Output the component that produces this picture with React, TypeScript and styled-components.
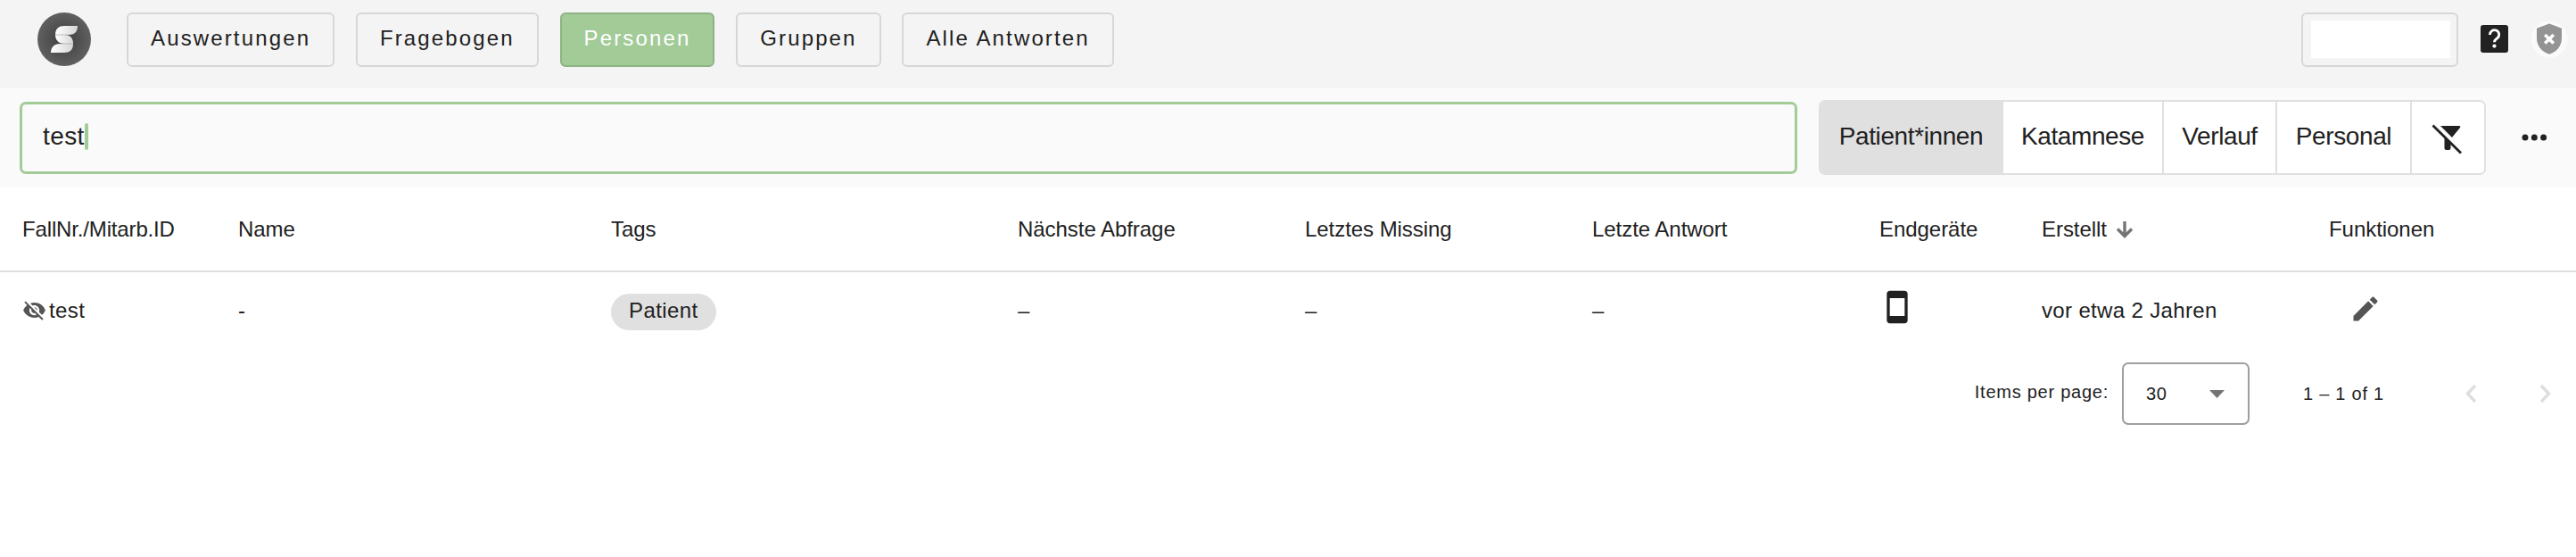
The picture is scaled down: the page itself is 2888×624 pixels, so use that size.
import React from "react";
import styled, { createGlobalStyle } from "styled-components";

interface NavItem {
  label: string;
  active?: boolean;
}

interface FilterItem {
  label: string;
  width: number;
  active?: boolean;
}

const GlobalStyle = createGlobalStyle`
  * {
    box-sizing: border-box;
  }

  body {
    margin: 0;
    background: #fff;
    color: #212121;
    font-family: "Liberation Sans", Arial, sans-serif;
  }
`;

const Page = styled.div`
  width: 2888px;
  height: 624px;
  overflow: hidden;
  background: #fff;
`;

const TopBar = styled.header`
  display: flex;
  align-items: flex-start;
  height: 99px;
  padding: 14px 15px 0 42px;
  background: #f4f4f4;
`;

const Logo = styled.svg`
  width: 60px;
  height: 60px;
  margin-right: 40px;
`;

const Nav = styled.nav`
  display: flex;
  gap: 23.8px;
  flex: 1;
`;

const NavButton = styled.button<{ $active?: boolean }>`
  height: 61px;
  padding: 0 25px 3px;
  border: 2px solid ${(props) => (props.$active ? "#8fb285" : "#d7d7d7")};
  border-radius: 6px;
  background: ${(props) => (props.$active ? "#a2cb98" : "transparent")};
  color: ${(props) => (props.$active ? "#fff" : "#212121")};
  font-family: inherit;
  font-size: 24px;
  letter-spacing: 2.14px;
  white-space: nowrap;
`;

const AccountButton = styled.div`
  width: 176px;
  height: 61px;
  padding: 7px 7px 8px 9px;
  border: 2px solid #d7d7d7;
  border-radius: 6px;
`;

const AccountName = styled.div`
  height: 42px;
  width: 156px;
  background: #fff;
`;

const HelpIcon = styled.svg`
  width: 42px;
  height: 42px;
  margin: 9px 0 0 19px;
`;

const ShieldIcon = styled.svg`
  width: 42px;
  height: 42px;
  margin: 9px -6px 0 20px;
`;

const SearchBar = styled.section`
  display: flex;
  align-items: center;
  height: 111px;
  padding: 0 0 1px 22px;
  background: #fafafa;
`;

const SearchField = styled.div`
  display: flex;
  align-items: center;
  width: 1993px;
  height: 81px;
  padding: 0 24px 2px 23px;
  border: 3px solid #a2cb98;
  border-radius: 7px;
  font-size: 28px;
  letter-spacing: 0.4px;
`;

const Caret = styled.span`
  width: 4px;
  height: 30px;
  border-radius: 2px;
  background: #a2cb98;
`;

const FilterGroup = styled.div`
  display: flex;
  height: 84px;
  margin-left: 24px;
  border: 2px solid #e0e0e0;
  border-radius: 7px;
  background: #fff;
  overflow: hidden;
`;

const FilterButton = styled.button<{ $width: number; $active?: boolean }>`
  display: flex;
  align-items: center;
  justify-content: center;
  width: ${(props) => props.$width}px;
  padding: 0 0 2px;
  border: 0;
  background: ${(props) => (props.$active ? "#e0e0e0" : "#fff")};
  color: #212121;
  font-family: inherit;
  font-size: 28px;
  letter-spacing: -0.4px;
  white-space: nowrap;

  & + & {
    border-left: 2px solid #e0e0e0;
  }
`;

const FilterOffIcon = styled.svg`
  width: 40px;
  height: 40px;
  margin-top: 6px;
`;

const MoreIcon = styled.svg`
  width: 40px;
  height: 40px;
  margin: 0 0 0 34px;
`;

const Row = styled.div`
  display: grid;
  grid-template-columns: 242px 418px 456px 322px 322px 322px 182px 322px 1fr;
  align-items: center;
  padding-left: 25px;
  font-size: 24px;
`;

const HeaderRow = styled(Row)`
  height: 95px;
  border-bottom: 2px solid #e0e0e0;
`;

const BodyRow = styled(Row)`
  height: 87px;
  padding-bottom: 1px;
`;

const Cell = styled.div<{ $spacing?: number }>`
  display: flex;
  align-items: center;
  letter-spacing: ${(props) => props.$spacing ?? -0.05}px;
  white-space: nowrap;
`;

const Chip = styled.span`
  height: 41px;
  margin-top: 3px;
  padding: 0 20px;
  border-radius: 21px;
  background: #e0e0e0;
  line-height: 38px;
`;

const EyeIcon = styled.svg`
  width: 27px;
  height: 27px;
  margin: -1px 3px 0 0;
`;

const SortIcon = styled.svg`
  width: 24px;
  height: 24px;
  margin: 2px 0 0 8px;
`;

const PhoneIcon = styled.svg`
  width: 40px;
  height: 40px;
  margin-top: -9px;
`;

const EditIcon = styled.svg`
  width: 36px;
  height: 36px;
  margin: -4px 0 0 23px;
`;

const Paginator = styled.footer`
  display: flex;
  align-items: center;
  justify-content: flex-end;
  height: 98px;
  padding-right: 14px;
  font-size: 20px;
  letter-spacing: 0.75px;
`;

const PageSizeLabel = styled.span`
  padding-bottom: 3px;
`;

const PageSize = styled.div`
  display: flex;
  align-items: center;
  justify-content: space-between;
  width: 143px;
  height: 70px;
  margin: 0 60px 0 15px;
  padding: 0 26px 0 25px;
  border: 2px solid #9e9e9e;
  border-radius: 7px;
`;

const RangeLabel = styled.span`
  width: 168px;
`;

const PageArrow = styled.svg`
  width: 42px;
  height: 42px;

  & + & {
    margin-left: 40px;
  }
`;

const navItems: NavItem[] = [
  { label: "Auswertungen" },
  { label: "Fragebogen" },
  { label: "Personen", active: true },
  { label: "Gruppen" },
  { label: "Alle Antworten" },
];

const filters: FilterItem[] = [
  { label: "Patient*innen", width: 203, active: true },
  { label: "Katamnese", width: 180 },
  { label: "Verlauf", width: 127 },
  { label: "Personal", width: 151 },
];

export default function App(): React.JSX.Element {
  return (
    <Page>
      <GlobalStyle />
      <TopBar>
        <Logo viewBox="0 0 60 60">
          <defs>
            <radialGradient id="disc">
              <stop offset="0" stopColor="#3c3c3c" />
              <stop offset="1" stopColor="#606060" />
            </radialGradient>
            <linearGradient id="leaf">
              <stop offset="0" stopColor="#ffffff" />
              <stop offset="1" stopColor="#d6d6d6" />
            </linearGradient>
          </defs>
          <circle cx="30" cy="30" r="30" fill="url(#disc)" />
          <g fill="url(#leaf)">
            <path d="M20 25C20 18 24 15 30 15H45C45 22 41 25 35 25Z" />
            <path d="M20 25H31C37 25 40 29 40 35H30C24 35 20 31 20 25Z" />
            <path d="M15 45C15 39 19 35 25 35H40C40 42 36 45 30 45Z" />
          </g>
          <path d="M20 25H35M25 35H40" stroke="#9a9a9a" strokeWidth="0.6" />
        </Logo>
        <Nav>
          {navItems.map((item) => (
            <NavButton key={item.label} $active={item.active}>
              {item.label}
            </NavButton>
          ))}
        </Nav>
        <AccountButton>
          <AccountName />
        </AccountButton>
        <HelpIcon viewBox="0 0 42 42">
          <rect x="6" y="5" width="31" height="31" rx="3" fill="#212121" />
          <path
            d="M16.5 16a5.1 5.1 0 1 1 8.4 3.600c-2 1.700-3.400 2.300-3.400 4.600"
            fill="none"
            stroke="#fff"
            strokeWidth="2.800"
          />
          <circle cx="21.500" cy="28.600" r="2.100" fill="#fff" />
        </HelpIcon>
        <ShieldIcon viewBox="0 0 42 42">
          <circle cx="21" cy="21" r="20.500" fill="#fafafa" />
          <path d="M21 3.500L35 8.700v11c0 8.500-5.500 15.500-14 18C12.500 35.200 7 28.200 7 19.700v-11z" fill="#949494" />
          <path d="M16.200 16l9.600 9.600m0-9.600l-9.600 9.600" stroke="#fff" strokeWidth="3.600" />
        </ShieldIcon>
      </TopBar>

      <SearchBar>
        <SearchField>
          test
          <Caret />
        </SearchField>
        <FilterGroup>
          {filters.map((filter) => (
            <FilterButton key={filter.label} $width={filter.width} $active={filter.active}>
              {filter.label}
            </FilterButton>
          ))}
          <FilterButton $width={83} aria-label="Filter">
            <FilterOffIcon viewBox="0 0 40 40" fill="#212121">
              <path d="M11 5H32q2 0 1 2L24 18z" />
              <path d="M15.500 18l7 7v5q0 2-2 2h-3q-2 0-2-2z" />
              <path d="M2.500 4.500L34 35.500" stroke="#212121" strokeWidth="2.800" />
            </FilterOffIcon>
          </FilterButton>
        </FilterGroup>
        <MoreIcon viewBox="0 0 40 40" fill="#212121">
          <circle cx="10" cy="20" r="3.500" />
          <circle cx="20.300" cy="20" r="3.500" />
          <circle cx="30.600" cy="20" r="3.500" />
        </MoreIcon>
      </SearchBar>

      <HeaderRow>
        <Cell $spacing={-0.15}>FallNr./Mitarb.ID</Cell>
        <Cell>Name</Cell>
        <Cell>Tags</Cell>
        <Cell>Nächste Abfrage</Cell>
        <Cell>Letztes Missing</Cell>
        <Cell>Letzte Antwort</Cell>
        <Cell>Endgeräte</Cell>
        <Cell>
          Erstellt
          <SortIcon viewBox="0 0 24 24" fill="none" stroke="#757575" strokeWidth="3.4">
            <path d="M12 2v17M4 10.500l8 8 8-8" />
          </SortIcon>
        </Cell>
        <Cell>Funktionen</Cell>
      </HeaderRow>

      <BodyRow>
        <Cell $spacing={0.4}>
          <EyeIcon viewBox="0 0 24 24" fill="#555">
            <path d="M12 7c2.760 0 5 2.240 5 5 0 .65-.13 1.260-.36 1.830l2.920 2.920c1.510-1.260 2.700-2.890 3.430-4.750-1.730-4.390-6-7.500-11-7.500-1.400 0-2.740.25-3.980.7l2.160 2.160C10.740 7.130 11.350 7 12 7zM2 4.270l2.280 2.280.46.46C3.080 8.300 1.780 10.020 1 12c1.730 4.390 6 7.500 11 7.500 1.550 0 3.030-.3 4.380-.84l.42.42L19.730 22 21 20.730 3.270 3 2 4.270zM7.530 9.800l1.550 1.550c-.05.21-.08.43-.08.65 0 1.660 1.340 3 3 3 .22 0 .44-.03.65-.08l1.550 1.550c-.67.33-1.410.53-2.200.53-2.760 0-5-2.240-5-5 0-.79.2-1.530.53-2.200zm4.310-.78l3.150 3.150.02-.16c0-1.660-1.340-3-3-3l-.17.01z" />
          </EyeIcon>
          test
        </Cell>
        <Cell>-</Cell>
        <Cell $spacing={0.4}>
          <Chip>Patient</Chip>
        </Cell>
        <Cell>–</Cell>
        <Cell>–</Cell>
        <Cell>–</Cell>
        <Cell>
          <PhoneIcon viewBox="0 0 24 24" fill="#212121">
            <path d="M17 1.010L7 1c-1.100 0-2 .9-2 2v18c0 1.100.9 2 2 2h10c1.100 0 2-.9 2-2V3c0-1.100-.9-1.990-2-1.990zM17 18H7V6h10v12z" />
          </PhoneIcon>
        </Cell>
        <Cell $spacing={0.35}>vor etwa 2 Jahren</Cell>
        <Cell>
          <EditIcon viewBox="0 0 24 24" fill="#555">
            <path d="M3 17.250V21h3.750L17.810 9.940l-3.750-3.750L3 17.250zM20.710 7.040c.39-.39.39-1.020 0-1.410l-2.340-2.340c-.39-.39-1.020-.39-1.410 0l-1.830 1.830 3.750 3.750 1.830-1.830z" />
          </EditIcon>
        </Cell>
      </BodyRow>

      <Paginator>
        <PageSizeLabel>Items per page:</PageSizeLabel>
        <PageSize>
          30
          <svg width="17" height="9" viewBox="0 0 17 9">
            <path d="M0 0H17L8.500 9Z" fill="#757575" />
          </svg>
        </PageSize>
        <RangeLabel>1 – 1 of 1</RangeLabel>
        <PageArrow viewBox="0 0 42 42" fill="none" stroke="#dedede" strokeWidth="3.4">
          <path d="M25 12l-8.500 9 8.500 9" />
        </PageArrow>
        <PageArrow viewBox="0 0 42 42" fill="none" stroke="#dedede" strokeWidth="3.4">
          <path d="M17 12l8.500 9-8.500 9" />
        </PageArrow>
      </Paginator>
    </Page>
  );
}
